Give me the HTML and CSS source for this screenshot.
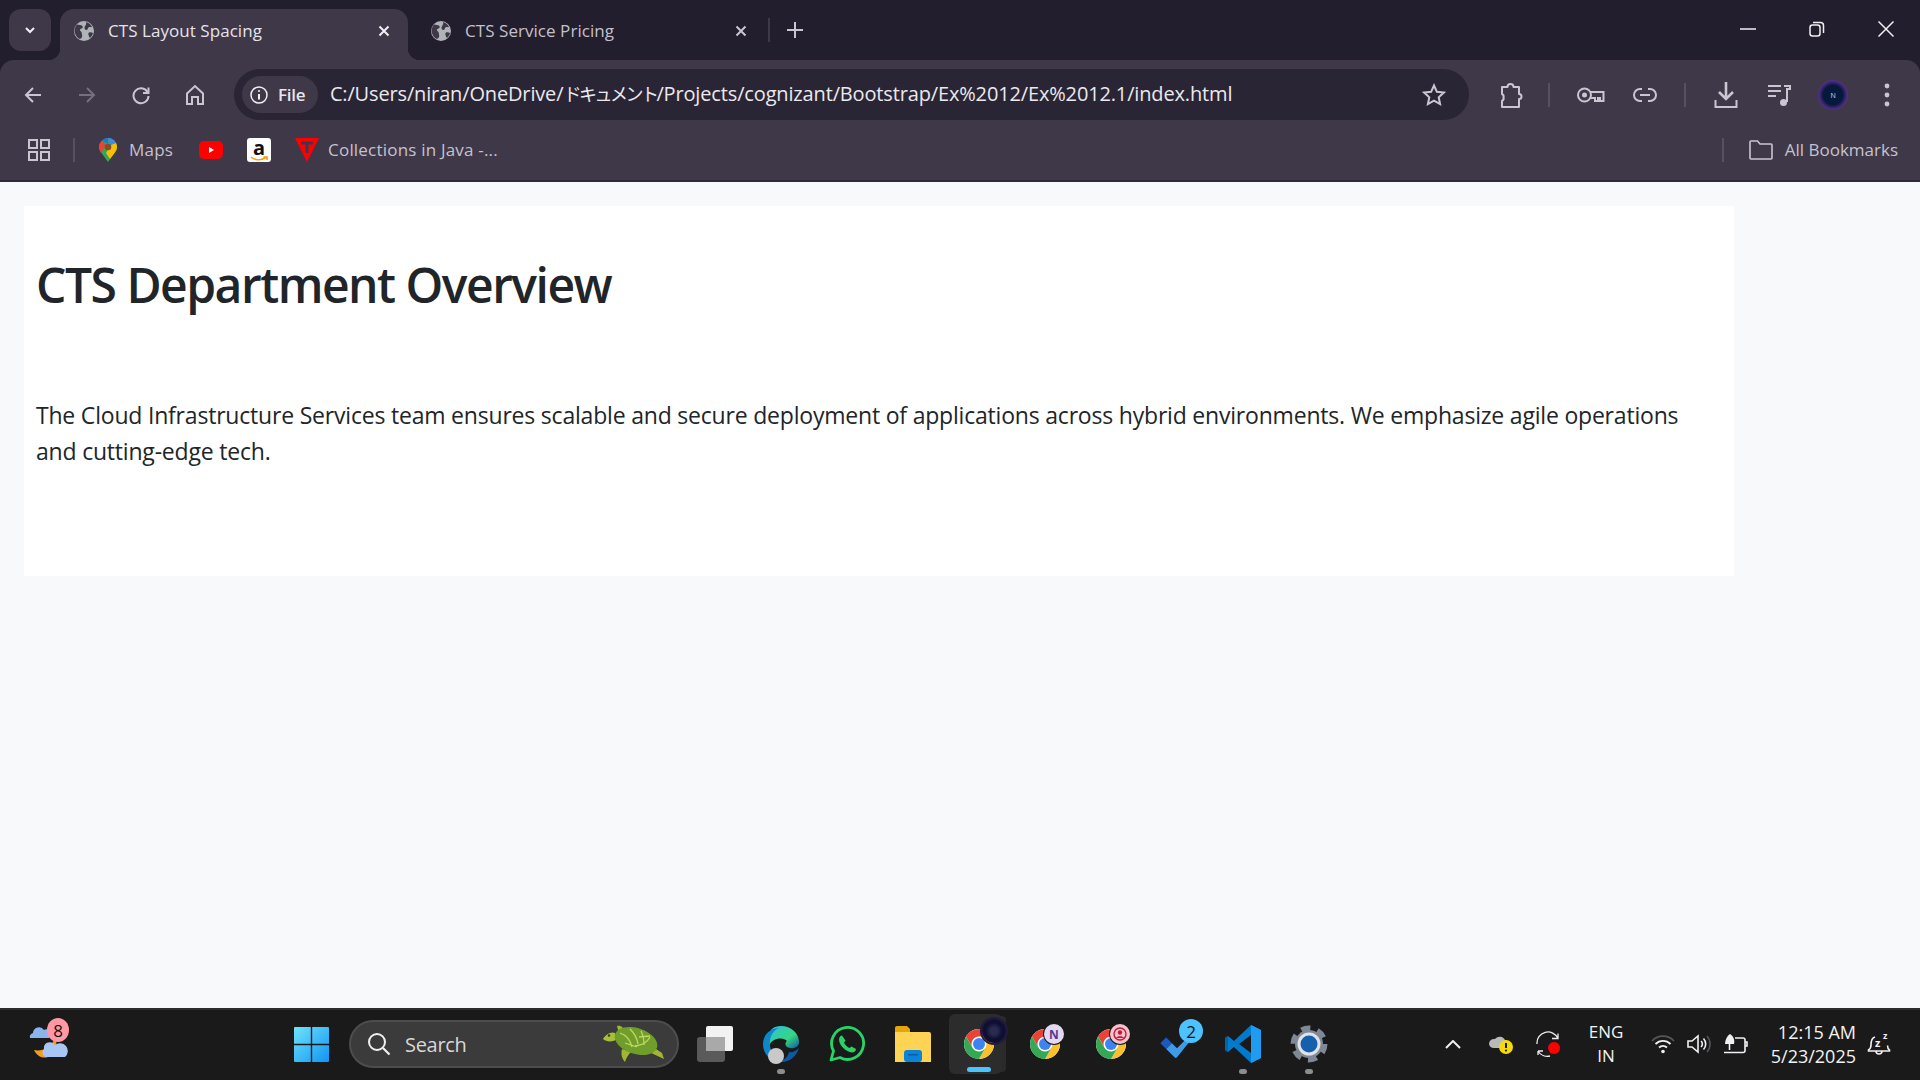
FILE: index.html
```html
<!DOCTYPE html>
<html lang="en">
<head>
<meta charset="utf-8">
<title>CTS Layout Spacing</title>
<link rel="stylesheet" href="styles.css">
</head>
<body>
<svg class="defs" width="0" height="0" aria-hidden="true">
  <defs>
    <symbol id="globe" viewBox="0 0 20 20">
      <circle cx="10" cy="10" r="10" fill="#b0b4b9"/>
      <path d="M3 3.500c2 .5 4 .2 5.500 1.500.8 1.500-.5 2.500-2 3-1 .6-.5 2 .5 2.600 1 .8.8 2.500 1.200 4 .3 1.500-1 3-2.300 3.500C3.500 17 1 14 .6 10.500.6 7.500 1.500 5 3 3.500Z" fill="#3f3849"/>
      <path d="M12 1c2.500.5 5 2.500 6 5-1.500.5-2.500-.5-3.500.500-1 .8-.5 2.500-2 2.500-1.500 0-2.500-1.500-1.800-3.200C11.300 4.500 12.800 3 12 1Z" fill="#3f3849"/>
      <path d="M15 11.500c1.500-.5 3 0 4 .5-.5 2-1.500 3.500-3 5-1-1-1-2-1.500-3-.5-1 0-2 .5-2.500Z" fill="#3f3849"/>
    </symbol>
    <symbol id="chrome" viewBox="0 0 48 48">
      <circle cx="24" cy="24" r="20" fill="#fff"/>
      <path d="M24 14H41.320A20 20 0 0 0 6.680 14L15.340 29A10 10 0 0 1 24 14Z" fill="#ea4335"/>
      <path d="M32.660 29 24 44A20 20 0 0 0 41.320 14H24A10 10 0 0 1 32.660 29Z" fill="#fbc02d"/>
      <path d="M15.340 29 6.680 14A20 20 0 0 0 24 44L32.660 29A10 10 0 0 1 15.340 29Z" fill="#34a853"/>
      <circle cx="24" cy="24" r="8" fill="#3f83f0"/>
    </symbol>
  </defs>
</svg>

<header class="chrome">
  <div class="tabstrip">
    <button class="tab-search">
      <svg width="14" height="14" viewBox="0 0 14 14"><path d="M3 5l4 4 4-4" class="st-white wide"/></svg>
    </button>
    <div class="tab tab-active">
      <svg class="favicon" width="20" height="20"><use href="#globe"/></svg>
      <span class="tab-title">CTS Layout Spacing</span>
      <svg class="tab-close" width="12" height="12" viewBox="0 0 12 12"><path d="M1.500 1.500l9 9M10.500 1.500l-9 9" class="st-white wide"/></svg>
    </div>
    <div class="tab tab-idle">
      <svg class="favicon" width="20" height="20"><use href="#globe"/></svg>
      <span class="tab-title">CTS Service Pricing</span>
      <svg class="tab-close" width="12" height="12" viewBox="0 0 12 12"><path d="M1.500 1.500l9 9M10.500 1.500l-9 9" class="st-soft wide"/></svg>
    </div>
    <span class="tab-sep"></span>
    <svg class="new-tab" width="16" height="16" viewBox="0 0 16 16"><path d="M8 0v16M0 8h16" class="st-soft wide"/></svg>
    <div class="window-controls">
      <span class="win-btn"><svg width="16" height="2" viewBox="0 0 16 2"><path d="M0 1h16" class="st-white"/></svg></span>
      <span class="win-btn"><svg width="16" height="16" viewBox="0 0 16 16"><rect x="1" y="4" width="10" height="11" rx="2.500" class="st-white"/><path d="M4 1.500h7.500a3 3 0 0 1 3 3V12" class="st-white"/></svg></span>
      <span class="win-btn"><svg width="16" height="16" viewBox="0 0 16 16"><path d="M.5.500l15 15M15.500.500l-15 15" class="st-white"/></svg></span>
    </div>
  </div>

  <div class="toolbar">
    <span class="tool"><svg width="20" height="20" viewBox="0 0 20 20"><path d="M18 10H3M10 3l-7 7 7 7" class="st-soft wide"/></svg></span>
    <span class="tool"><svg width="20" height="20" viewBox="0 0 20 20"><path d="M2 10h15M10 3l7 7-7 7" class="st-dim wide"/></svg></span>
    <span class="tool"><svg width="20" height="20" viewBox="0 0 20 20"><path d="M16.500 7A7.500 7.500 0 1 0 17.500 11" class="st-soft wide"/><path d="M17.500 2.500V8H12" class="st-soft wide"/></svg></span>
    <span class="tool"><svg width="20" height="22" viewBox="0 0 20 22"><path d="M2 9.500 10 2l8 7.500V20h-5v-7H7v7H2Z" class="st-soft wide"/></svg></span>
    <div class="omnibox">
      <div class="chip">
        <svg width="18" height="18" viewBox="0 0 18 18"><circle cx="9" cy="9" r="8" class="st-white"/><path d="M9 8v5.500" class="st-white wide"/><circle cx="9" cy="5" r="1.100" fill="#e8e6ec"/></svg>
        <span class="chip-text">File</span>
      </div>
      <span class="url">C:/Users/niran/OneDrive/<span class="url-cjk">ドキュメント</span>/Projects/cognizant/Bootstrap/Ex%2012/Ex%2012.1/index.html</span>
      <svg class="star" width="24" height="24" viewBox="0 0 24 24"><path d="M12 2.500l2.900 6.300 6.900.8-5.100 4.700 1.400 6.800-6.100-3.400-6.100 3.400 1.400-6.800L2.200 9.600l6.900-.8Z" class="st-soft wide"/></svg>
    </div>
    <span class="tool tool-ext"><svg width="24" height="28" viewBox="0 0 24 28"><path d="M3 6h5.500a3 3 0 0 1 6 0H20v7a2.500 2.500 0 0 1 0 5v8H3v-6a3 3 0 0 0 1.500-3.500A3 3 0 0 0 3 13Z" class="st-soft wide" stroke-linejoin="round"/></svg></span>
    <span class="tool-sep"></span>
    <span class="tool"><svg width="28" height="18" viewBox="0 0 28 18"><circle cx="7.500" cy="9" r="6.500" class="st-soft wide"/><circle cx="7.500" cy="9" r="2.500" fill="#c9c5d1"/><path d="M13 6h13.500v9H23v-3h-2v3h-3v-3h-4.500" class="st-soft wide"/></svg></span>
    <span class="tool"><svg width="26" height="16" viewBox="0 0 26 16"><path d="M10 2H8a6 6 0 0 0 0 12h2M16 2h2a6 6 0 0 1 0 12h-2M8 8h10" class="st-soft wide"/></svg></span>
    <span class="tool-sep tool-sep-b"></span>
    <span class="tool"><svg width="24" height="28" viewBox="0 0 24 28"><path d="M12 1v17M5 11l7 7 7-7" class="st-soft thick"/><path d="M1.500 19v7h21v-7" class="st-soft wide"/></svg></span>
    <span class="tool tool-music"><svg width="24" height="24" viewBox="0 0 24 24"><path d="M1 3h13M1 8h13M1 13h8" class="st-soft wide"/><path d="M17 3h6v3h-3v13" class="st-soft wide"/><circle cx="16.500" cy="19.500" r="3.500" fill="#c9c5d1"/></svg></span>
    <span class="tool"><span class="avatar">N</span></span>
    <span class="tool"><svg width="6" height="24" viewBox="0 0 6 24"><circle cx="3" cy="3" r="2.400" fill="#c9c5d1"/><circle cx="3" cy="12" r="2.400" fill="#c9c5d1"/><circle cx="3" cy="21" r="2.400" fill="#c9c5d1"/></svg></span>
  </div>

  <nav class="bookmarks">
    <span class="bm-apps"><svg width="22" height="22" viewBox="0 0 22 22"><g class="st-soft wide"><rect x="1" y="1" width="8" height="8"/><rect x="13" y="1" width="8" height="8"/><rect x="1" y="13" width="8" height="8"/><rect x="13" y="13" width="8" height="8"/></g></svg></span>
    <span class="bm-sep"></span>
    <span class="bm-maps">
      <svg width="20" height="24" viewBox="0 0 20 24">
        <path d="M10 0a9 9 0 0 1 9 9c0 2-1 4-2.500 6L10 24 3.500 15C2 13 1 11 1 9a9 9 0 0 1 9-9Z" fill="#34a853"/>
        <path d="M4 2.500A9 9 0 0 1 10 0v6Z" fill="#1a73e8"/>
        <path d="M10 0a9 9 0 0 1 8 5l-5 2Z" fill="#4285f4"/>
        <path d="M1 9a9 9 0 0 1 3-6.500L8 7l-5 8C2 13 1 11 1 9Z" fill="#ea4335"/>
        <path d="M18 5a9 9 0 0 1-1.500 10L12 21l-4-6 5-8Z" fill="#fbbc04"/>
        <circle cx="10" cy="9" r="3.300" fill="#8a4b2d"/>
      </svg>
      <span class="bm-label">Maps</span>
    </span>
    <svg class="bm-yt" width="24" height="18" viewBox="0 0 24 18"><rect width="24" height="18" rx="5" fill="#f00"/><path d="M10 6l5 3-5 3Z" fill="#fff"/></svg>
    <span class="bm-amazon">
      <span class="amazon-a">a</span>
      <svg width="18" height="6" viewBox="0 0 18 6"><path d="M1 1c4 3.500 10 3.500 15 .500M13.500 1H17v3" fill="none" stroke="#f90" stroke-width="1.600"/></svg>
    </span>
    <svg class="bm-t" width="24" height="24" viewBox="0 0 24 24"><path d="M0 0h24L12 24Z" fill="#f00"/><path d="M6 3.500h12v3h-4.500V15h-3V6.500H6Z" fill="#3f3849"/></svg>
    <span class="bm-label bm-java">Collections in Java -...</span>
    <div class="bm-right">
      <span class="bm-sep"></span>
      <svg class="bm-folder" width="24" height="20" viewBox="0 0 24 20"><path d="M1 2a1 1 0 0 1 1-1h6.500l2.500 3h11a1 1 0 0 1 1 1v13a1 1 0 0 1-1 1H2a1 1 0 0 1-1-1Z" class="st-soft thin"/></svg>
      <span class="bm-label">All Bookmarks</span>
    </div>
  </nav>
</header>

<main class="page">
  <section class="card">
    <h1 class="card-title">CTS Department Overview</h1>
    <p class="card-text">The Cloud Infrastructure Services team ensures scalable and secure deployment of applications across hybrid environments. We emphasize agile operations and cutting-edge tech.</p>
  </section>
</main>

<footer class="taskbar">
  <span class="tb-weather">
    <svg width="40" height="36" viewBox="0 0 40 36">
      <path d="M27 15a14 14 0 0 1-7 19C14 36 9 33 6 27c7 2 17-2 21-12Z" fill="#f59a23"/>
      <path d="M2 15a4 4 0 0 1 3-5 6 6 0 0 1 11-3 4.500 4.500 0 0 1 5 8Z" fill="#8bb4ef"/>
      <path d="M17 34a5 5 0 0 1-1-8 6 6 0 0 1 11-4 6 6 0 0 1 10 12Z" fill="#a7c6f5"/>
    </svg>
    <span class="badge badge-pink">8</span>
  </span>
  <svg class="tb-win" width="35" height="35" viewBox="0 0 35 35">
    <defs><linearGradient id="wing" x1="0" y1="0" x2="1" y2="1"><stop offset="0" stop-color="#6fe3fb"/><stop offset="1" stop-color="#0f95f4"/></linearGradient></defs>
    <path d="M1 0h15.800v16.800H0V1a1 1 0 0 1 1-1ZM18.200 0H34a1 1 0 0 1 1 1v15.800H18.200ZM0 18.200h16.800V35H1a1 1 0 0 1-1-1ZM18.200 18.200H35V34a1 1 0 0 1-1 1H18.200Z" fill="url(#wing)"/>
  </svg>
  <div class="tb-search">
    <svg width="24" height="24" viewBox="0 0 24 24"><circle cx="10" cy="10" r="8" fill="none" stroke="#f0f0f0" stroke-width="2"/><path d="M16 16l6.500 6.500" stroke="#f0f0f0" stroke-width="2.200"/></svg>
    <span class="tb-search-text">Search</span>
    <svg class="turtle" width="64" height="38" viewBox="0 0 64 38">
      <path d="M16 9 14 1c4-1 7 2 8 6ZM19 24c-1 4-1 8 3 13 1-4 4-8 6-10ZM46 27l15 7-2-6-9-6Z" fill="#a0b634"/>
      <path d="M12 8c-4-2-10 2-12 6 3 3 9 3 13 1Z" fill="#a8bf3c"/>
      <circle cx="6" cy="10.500" r="1.300" fill="#34400f"/>
      <ellipse cx="33" cy="16" rx="22" ry="13" transform="rotate(18 33 16)" fill="#6f9e2c"/>
      <path d="M17 8c6 2 10 6 12 14M27 4c4 4 7 8 8 15M38 6c2 4 3 9 3 14M47 12c-2 4-7 8-15 9M22 18l12 4M36 12l11-1" stroke="#c3d65f" stroke-width="1.300" fill="none"/>
    </svg>
  </div>
  <span class="tb-app tb-first">
    <svg width="36" height="36" viewBox="0 0 36 36"><rect y="11" width="28" height="25" rx="3" fill="#5a5a5a"/><rect x="9" width="27" height="25" rx="2" fill="#f2f2f2"/><rect x="9" y="11" width="19" height="14" fill="#a9a9a9"/></svg>
  </span>
  <span class="tb-app tb-run">
    <svg width="36" height="36" viewBox="0 0 36 36">
      <defs><linearGradient id="edge" x1="0" y1="0" x2="1" y2="1"><stop offset="0" stop-color="#2bc0e4"/><stop offset=".6" stop-color="#38d67f"/><stop offset="1" stop-color="#0c59a4"/></linearGradient></defs>
      <path d="M18 0c10 0 18 7 18 16 0 5-5 7-9 6-6-1-5-6-3-7-3-4-15-4-18 5-1-4 0-8 2-11C5 4 11 0 18 0Z" fill="url(#edge)"/>
      <path d="M0 18C0 8 8 2 16 2 9 5 6 12 7 20c1 7 7 13 15 15C10 38 0 30 0 18Z" fill="#0f86c9"/>
      <path d="M36 22c-3 9-10 14-17 14-3 0-5-1-6-2 9 2 12-4 13-8 3 1 7-1 10-4Z" fill="#0c59a4"/>
    </svg>
    <span class="profile-dot"></span>
  </span>
  <span class="tb-app">
    <svg width="36" height="36" viewBox="0 0 36 36"><path d="M2 34l2.500-9A16 16 0 1 1 11 31.500Z" fill="none" stroke="#25d366" stroke-width="2.800" stroke-linejoin="round"/><path d="M13 9.500c-1.500 0-3 2-3 4 0 6 7 12.500 13 13 2 0 4-1.500 4-3.500l-4.500-2.500-2 1.500c-2.500-1-4.500-3-5.500-5.500l1.500-2Z" fill="#25d366"/></svg>
  </span>
  <span class="tb-app">
    <svg width="36" height="36" viewBox="0 0 36 36"><path d="M0 2a2 2 0 0 1 2-2h10l3 3v6H0Z" fill="#e8a50b"/><path d="M0 6h34a2 2 0 0 1 2 2v28H0Z" fill="#ffd354"/><rect x="9" y="24" width="18" height="12" rx="3" fill="#0a84d8"/><rect x="13" y="28" width="10" height="1.500" fill="#0b5da0"/></svg>
  </span>
  <span class="tb-app tb-active">
    <svg class="tb-layer" width="36" height="36"><use href="#chrome"/></svg>
    <span class="chrome-avatar"></span>
    <span class="tb-underline"></span>
  </span>
  <span class="tb-app">
    <svg width="36" height="36"><use href="#chrome"/></svg>
    <span class="chrome-badge cb-n">N</span>
  </span>
  <span class="tb-app">
    <svg width="36" height="36"><use href="#chrome"/></svg>
    <span class="chrome-badge cb-r"><svg width="14" height="14" viewBox="0 0 14 14"><circle cx="7" cy="7" r="6" fill="none" stroke="#c2183c" stroke-width="1.400"/><circle cx="7" cy="5.500" r="2.200" fill="#c2183c"/><path d="M3 11c1-2.500 7-2.500 8 0Z" fill="#c2183c"/></svg></span>
  </span>
  <span class="tb-app tb-todo">
    <svg width="36" height="30" viewBox="0 0 40 36"><path d="M0 17l7-7 7 7-7 7Z" fill="#185abd"/><path d="M7 24l7-7 6 6L37 6l3 3-20 25a2 2 0 0 1-3 0Z" fill="#3f9be8"/></svg>
    <span class="badge badge-blue">2</span>
  </span>
  <span class="tb-app tb-run">
    <svg width="36" height="38" viewBox="0 0 36 38"><path d="M26 0 36 5v28l-10 5L9 22l-6 5-3-2V13l3-2 6 5Z" fill="#007acc"/><path d="M26 10 14 19l12 9Z" fill="#1a1a1a"/><path d="M26 0 36 5v28l-10 5Z" fill="#1f9cf0"/><path d="M0 13v12l3 2V11Z" fill="#0065a9"/></svg>
  </span>
  <span class="tb-app tb-run">
    <svg width="38" height="38" viewBox="0 0 38 38"><circle cx="19" cy="19" r="15.500" fill="none" stroke="#7f8894" stroke-width="6" stroke-dasharray="9 7.230"/><circle cx="19" cy="19" r="14" fill="#7f8894"/><circle cx="19" cy="19" r="11.500" fill="#dfe3e8"/><circle cx="19" cy="19" r="8.500" fill="#1560ad"/></svg>
  </span>
  <span class="tray-cell tray-chevron"><svg width="16" height="9" viewBox="0 0 16 9"><path d="M1 8l7-7 7 7" class="st-white wide"/></svg></span>
  <span class="tray-cell tray-cloud">
    <svg width="26" height="22" viewBox="0 0 26 22"><path d="M1 11a5 5 0 0 1 6-5 6 6 0 0 1 10 1c3 0 5 4 3 8H6a5 5 0 0 1-5-4Z" fill="#b9b9b9"/><circle cx="18" cy="14" r="7" fill="#f5d90a"/><path d="M18 10v5" stroke="#1a1a1a" stroke-width="2"/><circle cx="18" cy="17.500" r="1.100" fill="#1a1a1a"/></svg>
  </span>
  <span class="tray-cell tray-cloud">
    <svg width="26" height="26" viewBox="0 0 26 26"><path d="M1 13A11 11 0 0 1 22 7.500M22 2.500v5h-6M2 20h5M2 20v4M2 20A11 11 0 0 0 14 25" fill="none" stroke="#eee" stroke-width="1.300"/><circle cx="18" cy="17" r="6" fill="#f00"/></svg>
  </span>
  <span class="tray-lang">ENG<br>IN</span>
  <span class="tray-cell tray-wifi"><svg width="24" height="20" viewBox="0 0 24 20"><path d="M1 7a15 15 0 0 1 22 0" fill="none" stroke="#555" stroke-width="1.800"/><path d="M4.500 10a10.500 10.500 0 0 1 15 0M8 13.500a6 6 0 0 1 8 0" fill="none" stroke="#f0f0f0" stroke-width="1.800"/><circle cx="12" cy="17.500" r="1.800" fill="#f0f0f0"/></svg></span>
  <span class="tray-cell"><svg width="24" height="20" viewBox="0 0 24 20"><path d="M1 7v6h4l6 5V2L5 7Z" class="st-white thin"/><path d="M14 7a4 4 0 0 1 0 6M16.500 4.500a8 8 0 0 1 0 11" class="st-white thin"/><path d="M20 2a12 12 0 0 1 0 16" fill="none" stroke="#555" stroke-width="1.500"/></svg></span>
  <span class="tray-cell tray-batt"><svg width="24" height="20" viewBox="0 0 24 20"><path d="M6 0c3 2 5 5 4 10H1c0-4 2-8 5-10Z" fill="#f0f0f0"/><path d="M5.500 10v6M0 18.500h19a2 2 0 0 0 2-2V6a2 2 0 0 0-2-2h-8M21 8h2v4h-2" class="st-white thin"/></svg></span>
  <span class="tray-clock">12:15 AM<br>5/23/2025</span>
  <span class="tray-cell tray-bell"><svg width="28" height="28" viewBox="0 0 28 28"><path d="M10 7C6.500 8 6 11 6 15c0 2-1 4-2.500 5v1h21v-1c-1.500-1-2-2.500-2-4.500M11 21a3 3 0 0 0 6 0" class="st-white thin"/><text x="10" y="17" class="bell-z">z</text><text x="18" y="9" class="bell-z bell-z-small">z</text></svg></span>
</footer>
</body>
</html>
```

FILE: styles.css
```css
* { box-sizing: border-box; }
html, body { margin: 0; height: 100%; }
body {
  display: flex;
  flex-direction: column;
  height: 100vh;
  overflow: hidden;
  background: #f8f9fa;
  font-family: "Open Sans", "Noto Sans CJK JP", sans-serif;
  color: #212529;
}
.defs { position: absolute; }
svg { display: block; flex: none; }

.st-white, .st-soft, .st-dim { fill: none; stroke-width: 1.500; }
.st-white { stroke: #f1eff4; }
.st-soft { stroke: #c9c5d1; }
.st-dim { stroke: #75707f; }
.wide { stroke-width: 2; }
.thick { stroke-width: 2.600; }
.thin { stroke-width: 1.600; }

/* Browser frame */
.chrome { flex: none; background: #231e2e; }
.tabstrip { display: flex; align-items: flex-end; height: 60px; padding-left: 9px; }
.tab-search {
  display: flex; align-items: center; justify-content: center;
  width: 42px; height: 42px; margin: 0 0 9px; padding: 0;
  border: 0; border-radius: 12px; background: #3f3849;
}
.tab {
  position: relative; display: flex; align-items: center;
  width: 348px; height: 51px; margin-left: 9px; padding: 0 18px 8px 14px;
  font-size: 17px;
}
.tab-active { background: #3f3849; border-radius: 14px 14px 0 0; color: #e6e3ea; }
.tab-active::before, .tab-active::after {
  content: ""; position: absolute; bottom: 0; width: 12px; height: 12px;
}
.tab-active::before { left: -12px; background: radial-gradient(circle at 0 0, transparent 12px, #3f3849 12.500px); }
.tab-active::after { right: -12px; background: radial-gradient(circle at 100% 0, transparent 12px, #3f3849 12.500px); }
.tab-idle { color: #c4c0cb; }
.tab-title { margin-left: 14px; letter-spacing: .05px; white-space: nowrap; }
.tab-close { margin-left: auto; }
.tab-sep { width: 2px; height: 24px; margin: 0 0 18px 3px; background: #3f3849; }
.new-tab { margin: 0 0 22px 17px; }
.window-controls { display: flex; margin: 0 0 0 auto; align-self: stretch; }
.win-btn { display: flex; align-items: center; justify-content: center; width: 69px; height: 58px; }

.toolbar {
  display: flex; align-items: center; height: 60px; padding: 0 6px 0 6px;
  background: #3f3849; border-radius: 14px 14px 0 0;
}
.tool { display: flex; align-items: center; justify-content: center; width: 54px; height: 51px; margin-top: 10px; }
.omnibox {
  display: flex; align-items: center; width: 1236px; height: 51px; margin: 9px 0 0 12px;
  padding: 0 23px 0 8px; border-radius: 26px; background: #2a2534;
}
.chip {
  display: flex; align-items: center; gap: 10px; width: 76px; height: 37px; padding-left: 8px;
  border-radius: 19px; background: #3f3849;
}
.chip-text { font-size: 17px; font-weight: 600; color: #e8e6ec; letter-spacing: -.2px; }
.url { margin: 0 0 2px 12px; font-size: 20px; color: #ebe9ee; white-space: nowrap; letter-spacing: -.15px; }
.url-cjk { font-size: 18px; letter-spacing: -2.500px; }
.star { margin-left: auto; }
.tool-ext { margin-left: 15px; }
.tool-sep { width: 2px; height: 24px; margin: 10px 0 0 10px; background: #57505f; }
.tool-sep + .tool { margin-left: 14px; }
.tool-sep-b { margin-left: 12px; }
.tool-sep-b + .tool { margin-left: 13px; }
.tool-music { margin-left: -1px; }
.avatar {
  display: flex; align-items: center; justify-content: center;
  width: 30px; height: 30px; border-radius: 50%;
  font-size: 7px; color: #ddd;
  background: radial-gradient(circle, #04193c 0 46%, #3a2670 60%, #6a3a9e 80%, #241a55 100%);
}

.bookmarks {
  display: flex; align-items: center; height: 62px; padding: 0 22px 0 28px;
  background: #3f3849; border-bottom: 2px solid #302b39;
}
.bm-apps { width: 22px; }
.bm-sep { width: 2px; height: 24px; margin-left: 23px; background: #57505f; }
.bm-maps { display: flex; align-items: center; margin-left: 23px; }
.bm-label { margin-bottom: 2px; font-size: 17px; color: #c6c2cd; letter-spacing: .2px; white-space: nowrap; }
.bm-maps .bm-label { margin-left: 11px; }
.bm-yt { margin-left: 26px; }
.bm-amazon {
  display: flex; flex-direction: column; align-items: center; justify-content: flex-end;
  width: 24px; height: 24px; margin-left: 24px; border-radius: 3px; background: #fff;
}
.amazon-a { font-size: 20px; line-height: 17px; font-weight: 700; color: #111; }
.bm-t { margin-left: 24px; }
.bm-java { margin-left: 9px; }
.bm-right { display: flex; align-items: center; margin-left: auto; }
.bm-right .bm-sep { margin: 0; }
.bm-folder { margin-left: 25px; }
.bm-right .bm-label { margin-left: 12px; letter-spacing: 0; }

/* Page */
.page { flex: 1; padding: 24px 0 0 24px; min-height: 0; }
.card { width: 1710px; padding: 55px 12px 107px; background: #fff; }
.card-title { margin: 0 0 88px; font-size: 48px; line-height: 48px; font-weight: 600; letter-spacing: -1.500px; }
.card-text { margin: 0; font-size: 23px; line-height: 36px; letter-spacing: -.2px; max-width: 1660px; }

/* Taskbar */
.taskbar {
  flex: none; display: flex; align-items: center; height: 72px; padding: 0 0 2px 28px;
  background: #1a1a1a; border-top: 2px solid #2d2d2d; color: #f2f2f2;
}
.tb-weather { position: relative; display: block; width: 40px; margin-bottom: 6px; }
.badge {
  position: absolute; display: flex; align-items: center; justify-content: center;
  border-radius: 50%; color: #111; font-size: 17px;
}
.badge-pink { left: 19px; top: -5px; width: 22px; height: 24px; background: #ff98a6; }
.badge-blue { right: 7px; top: 5px; width: 24px; height: 24px; background: #4cc2ff; }
.tb-win { margin-left: 226px; }
.tb-search {
  display: flex; align-items: center; width: 330px; height: 48px; margin-left: 20px; padding: 0 10px 0 16px;
  border: 2px solid #4d4d4d; border-radius: 24px; background: #3b3b3b;
}
.tb-search-text { margin-left: 14px; font-size: 20px; color: #d8d8d8; letter-spacing: -.3px; }
.turtle { margin-left: auto; }
.tb-app { position: relative; display: flex; align-items: center; justify-content: center; width: 66px; height: 60px; }
.tb-first { margin-left: 3px; }
.tb-run::after {
  content: ""; position: absolute; bottom: 0; left: 29px; width: 8px; height: 5px; border-radius: 3px; background: #8d8d8d;
}
.tb-active::before {
  content: ""; position: absolute; top: 0; bottom: 0; left: 3px; width: 53px;
  background: #2c2c2c; border-radius: 6px; box-shadow: 6px 0 0 -2px #2a2a2a;
}
.tb-layer { position: relative; }
.tb-underline { position: absolute; bottom: 2px; left: 21px; width: 24px; height: 5px; border-radius: 3px; background: #4cc2ff; }
.chrome-avatar {
  position: absolute; right: 6px; top: 5px; width: 24px; height: 24px; border-radius: 50%;
  background: radial-gradient(circle, #2b2b52 0 20%, #0e0e30 50%, #1a1540 100%); box-shadow: 0 0 0 2px #231a3f;
}
.chrome-badge {
  position: absolute; right: 14px; top: 10px; display: flex; align-items: center; justify-content: center;
  width: 20px; height: 20px; border-radius: 50%; font-size: 12px; font-weight: 700;
  box-shadow: 0 0 0 1px #1a1a1a;
}
.cb-n { background: #e5d9f2; color: #5a3a8e; }
.cb-r { background: #f6c3cd; }
.profile-dot {
  position: absolute; left: 20px; bottom: 10px; width: 16px; height: 16px; border-radius: 50%; background: #c9c9c9;
}
.tray-cell { display: flex; align-items: center; justify-content: center; width: 36px; }
.tray-chevron { width: 40px; margin-left: 91px; }
.tray-cloud { width: 40px; margin-left: 8px; }
.tray-lang { width: 50px; margin-left: 12px; font-size: 17px; line-height: 24px; text-align: center; }
.tray-wifi { margin-left: 14px; }
.tray-batt { margin-left: 1px; }
.tray-clock { width: 102px; font-size: 18px; line-height: 24px; text-align: right; white-space: nowrap; }
.tray-bell { margin-left: 5px; }
.bell-z { font-size: 11px; font-weight: 700; fill: #f1eff4; }
.bell-z-small { font-size: 9px; }
```
